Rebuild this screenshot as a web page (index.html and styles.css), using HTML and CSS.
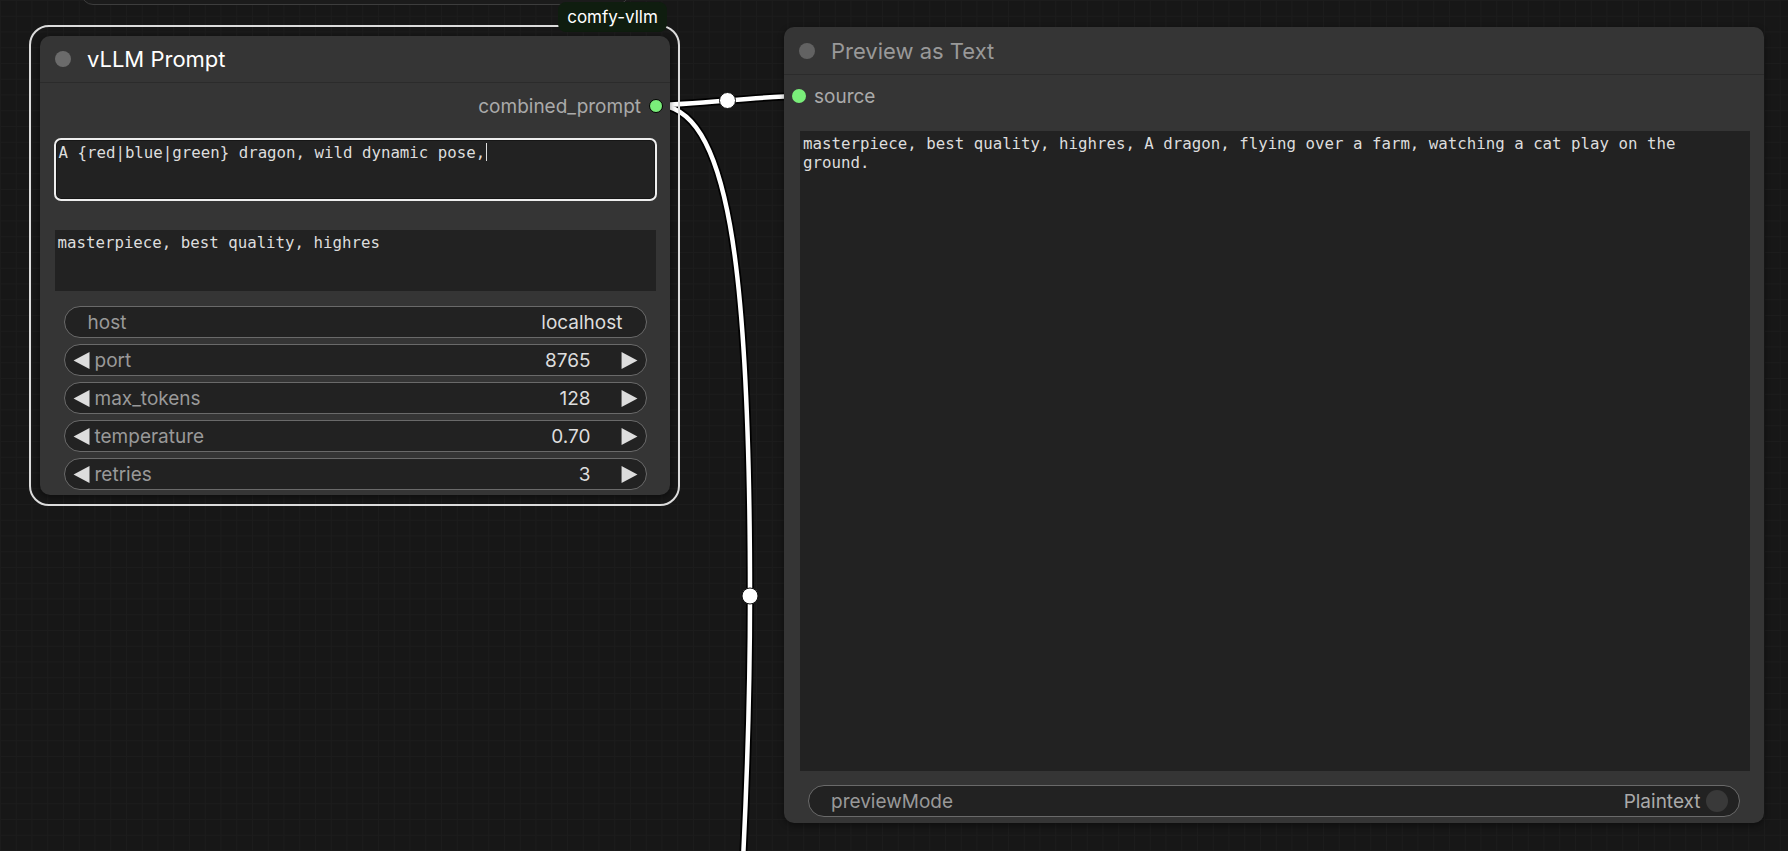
FILE: index.html
```html
<!DOCTYPE html>
<html lang="en">

<head>
    <meta charset="UTF-8">
    <meta name="viewport" content="width=device-width, initial-scale=1.0">
    <title>vLLM Prompt</title>
    <link rel="stylesheet" href="styles.css">
</head>

<body>
    <div class="canvas">
        <div class="ghost-node"></div>

        <svg class="links" viewBox="0 0 1788 851">
            <path class="link-shadow" d="M656 105 C692 105 763 96 799 96" />
            <path class="link-shadow" d="M656 105 C728 105 750 262 750 596 C750 720 746 800 743 860" />
            <path class="link-line" d="M656 105 C692 105 763 96 799 96" />
            <path class="link-line" d="M656 105 C728 105 750 262 750 596 C750 720 746 800 743 860" />
            <circle class="link-center" cx="727.5" cy="100.5" r="8" />
            <circle class="link-center" cx="750" cy="596" r="8" />
        </svg>

        <div class="selection"></div>
        <div class="badge">comfy-vllm</div>

        <!-- vLLM Prompt -->
        <div class="node node-prompt">
            <div class="node-title">
                <span class="title-dot"></span>
                <span>vLLM Prompt</span>
            </div>
            <div class="slots">
                <div class="slot slot-out">
                    <span>combined_prompt</span>
                    <span class="slot-dot"></span>
                </div>
            </div>
            <div class="textarea focused">A {red|blue|green} dragon, wild dynamic pose,<span class="caret"></span></div>
            <div class="textarea second">masterpiece, best quality, highres</div>
            <div class="widgets">
                <div class="widget">
                    <span class="label">host</span>
                    <span class="value">localhost</span>
                </div>
                <div class="widget number">
                    <svg class="arrow" viewBox="0 0 16 16"><polygon points="15.5,0 0.5,8 15.5,16" /></svg>
                    <span class="label">port</span>
                    <span class="value">8765</span>
                    <svg class="arrow" viewBox="0 0 16 16"><polygon points="0.5,0 15.5,8 0.5,16" /></svg>
                </div>
                <div class="widget number">
                    <svg class="arrow" viewBox="0 0 16 16"><polygon points="15.5,0 0.5,8 15.5,16" /></svg>
                    <span class="label">max_tokens</span>
                    <span class="value">128</span>
                    <svg class="arrow" viewBox="0 0 16 16"><polygon points="0.5,0 15.5,8 0.5,16" /></svg>
                </div>
                <div class="widget number">
                    <svg class="arrow" viewBox="0 0 16 16"><polygon points="15.5,0 0.5,8 15.5,16" /></svg>
                    <span class="label">temperature</span>
                    <span class="value">0.70</span>
                    <svg class="arrow" viewBox="0 0 16 16"><polygon points="0.5,0 15.5,8 0.5,16" /></svg>
                </div>
                <div class="widget number">
                    <svg class="arrow" viewBox="0 0 16 16"><polygon points="15.5,0 0.5,8 15.5,16" /></svg>
                    <span class="label">retries</span>
                    <span class="value">3</span>
                    <svg class="arrow" viewBox="0 0 16 16"><polygon points="0.5,0 15.5,8 0.5,16" /></svg>
                </div>
            </div>
        </div>

        <!-- Preview as Text -->
        <div class="node node-preview">
            <div class="node-title">
                <span class="title-dot"></span>
                <span>Preview as Text</span>
            </div>
            <div class="slots">
                <div class="slot slot-in">
                    <span class="slot-dot"></span>
                    <span>source</span>
                </div>
            </div>
            <div class="textarea preview">masterpiece, best quality, highres, A dragon, flying over a farm, watching a cat play on the ground.</div>
            <div class="widgets">
                <div class="widget toggle">
                    <span class="label">previewMode</span>
                    <span class="value">Plaintext</span>
                    <span class="knob"></span>
                </div>
            </div>
        </div>
    </div>
</body>

</html>
```

FILE: styles.css
```css
body {
    margin: 0;
    background: #171717;
    font-family: Inter, "Noto Sans", sans-serif;
}

.canvas {
    position: relative;
    width: 1788px;
    height: 851px;
    overflow: hidden;
    background-color: #171717;
    background-image:
        linear-gradient(#1c1c1c 1px, transparent 1px),
        linear-gradient(90deg, #1c1c1c 1px, transparent 1px);
    background-size: 15.75px 15.75px;
}


/* node cut off at the top edge */

.ghost-node {
    position: absolute;
    left: 81px;
    top: -40px;
    width: 546px;
    height: 43px;
    border: 1px solid #3d3d3d;
    border-radius: 12px;
    background: #1b1b1b;
}


/* links */

.links {
    position: absolute;
    left: 0;
    top: 0;
    width: 1788px;
    height: 851px;
}

.link-shadow {
    fill: none;
    stroke: #000;
    stroke-width: 8;
}

.link-line {
    fill: none;
    stroke: #fff;
    stroke-width: 4.5;
}

.link-center {
    fill: #fff;
    stroke: #111;
    stroke-width: 1;
}


/* selected node outline and badge */

.selection {
    position: absolute;
    left: 29px;
    top: 25px;
    width: 651px;
    height: 481px;
    box-sizing: border-box;
    border: 2px solid #dcdcdc;
    border-radius: 20px;
}

.badge {
    position: absolute;
    left: 558px;
    top: 2px;
    width: 109px;
    height: 30px;
    display: flex;
    align-items: center;
    justify-content: center;
    background: #0f1d0f;
    color: #fff;
    font-size: 17px;
    border-radius: 8px;
}


/* nodes */

.node {
    position: absolute;
    display: flex;
    flex-direction: column;
    box-sizing: border-box;
    background: #353535;
    border-radius: 10px;
    box-shadow: 0 2px 6px rgba(0, 0, 0, 0.45);
}

.node-prompt {
    left: 40px;
    top: 36px;
    width: 630px;
    height: 459px;
}

.node-preview {
    left: 784px;
    top: 27px;
    width: 980px;
    height: 796px;
}

.node-title {
    flex: none;
    display: flex;
    align-items: center;
    gap: 16px;
    height: 47px;
    padding-left: 15px;
    box-sizing: border-box;
    border-bottom: 1px solid #2b2b2b;
    font-size: 22px;
    color: #fff;
}

.node-preview .node-title {
    height: 48px;
    color: #999;
}

.title-dot {
    width: 16px;
    height: 16px;
    border-radius: 50%;
    background: #6b6b6b;
}

.node-preview .title-dot {
    background: #626262;
}


/* slots */

.slots {
    flex: none;
    display: flex;
    height: 55px;
    padding-top: 8px;
    box-sizing: border-box;
    font-size: 19px;
    color: #aaa;
}

.node-preview .slots {
    height: 56px;
    padding-top: 6px;
}

.slot {
    display: flex;
    align-items: center;
    gap: 8px;
    height: 30px;
}

.slot-out {
    margin-left: auto;
    margin-right: 7px;
}

.slot-in {
    margin-left: 8px;
}

.slot-dot {
    width: 14px;
    height: 14px;
    box-sizing: border-box;
    border-radius: 50%;
    background: #7aee7a;
}

.slot-out .slot-dot {
    border: 1.5px solid #000;
}


/* text areas */

.textarea {
    flex: none;
    margin: 0 14.5px;
    padding: 3px;
    box-sizing: border-box;
    background: #222;
    color: #ddd;
    font-family: "DejaVu Sans Mono", "Liberation Mono", monospace;
    font-size: 15.75px;
    line-height: 19.4px;
    white-space: pre-wrap;
}

.textarea.focused {
    margin: 2px 15.5px 2px;
    height: 59px;
    outline: 2px solid #eee;
    border-radius: 5px;
    box-shadow: inset 0 0 0 1px #161616;
}

.textarea.second {
    margin-top: 29px;
    height: 61px;
}

.textarea.preview {
    margin: 0 14px 0 16px;
    height: 640px;
}

.caret {
    display: inline-block;
    width: 1px;
    height: 18px;
    margin-left: 1px;
    vertical-align: -3px;
    background: #ddd;
}


/* widgets */

.widgets {
    flex: none;
    display: flex;
    flex-direction: column;
    gap: 6px;
    margin-top: 15px;
    padding: 0 23.5px;
}

.node-preview .widgets {
    margin-top: 14px;
    padding: 0 24px;
}

.widget {
    display: flex;
    align-items: center;
    height: 32px;
    padding: 0 23px;
    box-sizing: border-box;
    border: 1px solid #6a6a6a;
    border-radius: 16px;
    background: #222;
    font-size: 19px;
    color: #999;
}

.widget .value {
    margin-left: auto;
    color: #ddd;
}

.widget.number {
    padding: 0 8px;
}

.widget.number .label {
    margin-left: 5px;
}

.widget.number .value {
    margin-right: 30px;
}

.arrow {
    flex: none;
    width: 17px;
    height: 17px;
    fill: #ddd;
}

.widget.toggle {
    padding: 0 11px 0 22px;
}

.widget.toggle .value {
    color: #aaa;
}

.knob {
    width: 22px;
    height: 22px;
    margin-left: 5.5px;
    border-radius: 50%;
    background: #393939;
}
```
